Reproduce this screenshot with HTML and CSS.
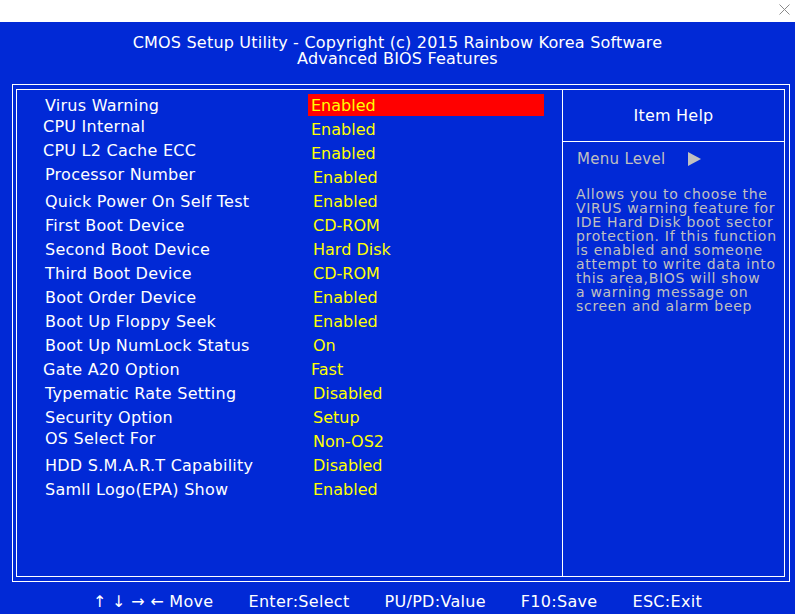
FILE: index.html
```html
<!DOCTYPE html>
<html>
<head>
<meta charset="utf-8">
<link rel="stylesheet" href="styles.css">
</head>
<body>
<div class="topbar">
  <svg class="close" width="11" height="11" viewBox="0 0 11 11"><path d="M0.5 0.5 L10.5 10.5 M10.5 0.5 L0.5 10.5" stroke="#8a8a8a" stroke-width="1" fill="none"/></svg>
</div>
<div class="screen">
  <header class="title">
    <div>CMOS Setup Utility - Copyright (c) 2015 Rainbow Korea Software</div>
    <div>Advanced BIOS Features</div>
  </header>
  <div class="frame">
    <div class="inner">
      <div class="items">
        <div class="row"><span class="label">Virus Warning</span><span class="value sel">Enabled</span></div>
        <div class="row"><span class="label up left">CPU Internal</span><span class="value near">Enabled</span></div>
        <div class="row"><span class="label up left">CPU L2 Cache ECC</span><span class="value near">Enabled</span></div>
        <div class="row"><span class="label up">Processor Number</span><span class="value">Enabled</span></div>
        <div class="row"><span class="label">Quick Power On Self Test</span><span class="value">Enabled</span></div>
        <div class="row"><span class="label">First Boot Device</span><span class="value">CD-ROM</span></div>
        <div class="row"><span class="label">Second Boot Device</span><span class="value">Hard Disk</span></div>
        <div class="row"><span class="label">Third Boot Device</span><span class="value">CD-ROM</span></div>
        <div class="row"><span class="label">Boot Order Device</span><span class="value">Enabled</span></div>
        <div class="row"><span class="label">Boot Up Floppy Seek</span><span class="value">Enabled</span></div>
        <div class="row"><span class="label">Boot Up NumLock Status</span><span class="value">On</span></div>
        <div class="row"><span class="label left">Gate A20 Option</span><span class="value near">Fast</span></div>
        <div class="row"><span class="label">Typematic Rate Setting</span><span class="value">Disabled</span></div>
        <div class="row"><span class="label">Security Option</span><span class="value">Setup</span></div>
        <div class="row"><span class="label up">OS Select For</span><span class="value">Non-OS2</span></div>
        <div class="row"><span class="label">HDD S.M.A.R.T Capability</span><span class="value">Disabled</span></div>
        <div class="row"><span class="label">Samll Logo(EPA) Show</span><span class="value">Enabled</span></div>
      </div>
      <aside class="help">
        <div class="help-head">Item Help</div>
        <div class="menu-level"><span class="ml-text">Menu Level</span><span class="tri"></span></div>
        <p class="help-text">Allows you to choose the<br>VIRUS warning feature for<br>IDE Hard Disk boot sector<br>protection. If this function<br>is enabled and someone<br>attempt to write data into<br>this area,BIOS will show<br>a warning message on<br>screen and alarm beep</p>
      </aside>
    </div>
  </div>
  <footer class="keys">
    <span>↑ ↓ → ← Move</span>
    <span>Enter:Select</span>
    <span>PU/PD:Value</span>
    <span>F10:Save</span>
    <span>ESC:Exit</span>
  </footer>
</div>
</body>
</html>
```
FILE: styles.css
```css
html, body {
  margin: 0;
  padding: 0;
}
body {
  width: 795px;
  height: 614px;
  overflow: hidden;
  background: #0129d6;
  font-family: "DejaVu Sans", Verdana, sans-serif;
  font-size: 16px;
  color: #ffffff;
}
.topbar {
  height: 22px;
  background: #ffffff;
  position: relative;
}
.close {
  position: absolute;
  left: 779px;
  top: 4px;
}
.screen {
  background: #0129d6;
  height: 592px;
  overflow: hidden;
}
.title {
  padding-top: 13px;
  text-align: center;
  line-height: 16px;
  letter-spacing: 0.2px;
}
.frame {
  margin: 17px 0 0 12px;
  width: 778px;
  height: 498px;
  box-sizing: border-box;
  border: 1px solid #ffffff;
  padding: 4px 4px 4px 3px;
}
.inner {
  width: 769px;
  height: 488px;
  box-sizing: border-box;
  border: 1px solid #ffffff;
  display: flex;
}
.items {
  width: 545px;
  padding-top: 3px;
}
.row {
  height: 24px;
  display: flex;
  align-items: center;
}
.label {
  width: 263px;
  margin-left: 28px;
  box-sizing: border-box;
  line-height: 16px;
  padding-top: 2px;
  letter-spacing: 0.25px;
}
.label.up {
  padding-top: 0;
  padding-bottom: 4px;
}
.label.left {
  margin-left: 26px;
  width: 265px;
}
.value {
  width: 236px;
  height: 22px;
  line-height: 24px;
  padding-left: 5px;
  box-sizing: border-box;
  color: #ffff00;
}
.value.near {
  padding-left: 3px;
}
.value.sel {
  background: #ff0000;
  padding-left: 3px;
}
.help {
  width: 221px;
  border-left: 1px solid #ffffff;
}
.help-head {
  height: 51px;
  border-bottom: 1px solid #ffffff;
  display: flex;
  align-items: center;
  justify-content: center;
  line-height: 16px;
  letter-spacing: 0.2px;
}
.menu-level {
  margin-top: 9px;
  padding-left: 14px;
  height: 16px;
  display: flex;
  align-items: center;
  color: #c0c0c0;
  font-size: 15px;
  letter-spacing: 0.3px;
}
.ml-text {
  width: 111px;
}
.tri {
  width: 0;
  height: 0;
  border-top: 7px solid transparent;
  border-bottom: 7px solid transparent;
  border-left: 13px solid #c0c0c0;
}
.help-text {
  margin: 20px 0 0 13px;
  font-size: 14px;
  line-height: 14px;
  letter-spacing: 0.7px;
  color: #c0c0c0;
  white-space: nowrap;
}
.keys {
  margin-top: 12px;
  display: flex;
  justify-content: center;
  gap: 35px;
  line-height: 16px;
  letter-spacing: 0.3px;
}
```
